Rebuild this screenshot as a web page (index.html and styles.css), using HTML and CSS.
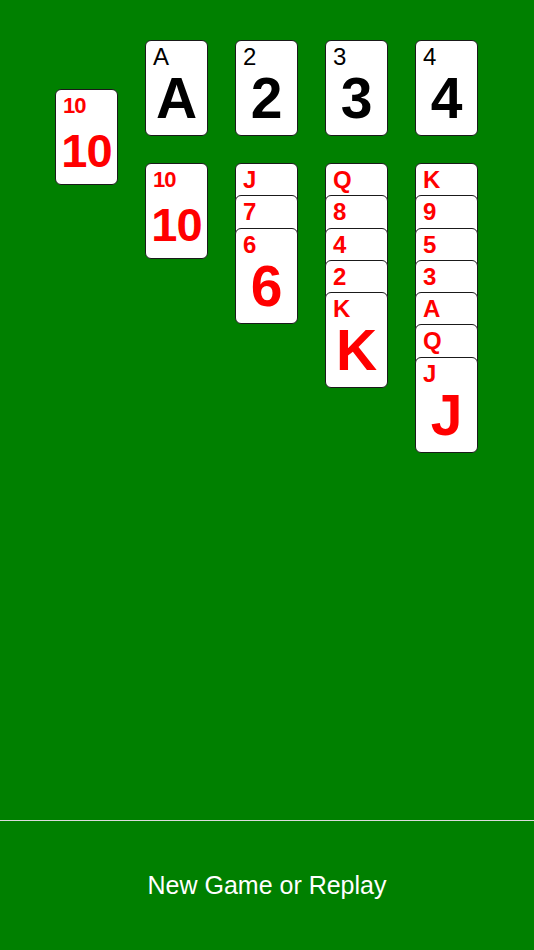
FILE: index.html
```html
<!DOCTYPE html>
<html lang="en">
  <head>
    <meta charset="UTF-8" />
    <meta name="viewport" content="width=device-width, initial-scale=1.0" />
    <title>Solitaire</title>
    <link rel="stylesheet" href="styles.css">
  </head>
  <body>
    <div class="board">
      <!-- stock -->
      <div class="card red stock">
        <div class="small ten">10</div>
        <div class="big ten">10</div>
      </div>

      <!-- foundations -->
      <div class="card black">
        <div class="small">A</div>
        <div class="big">A</div>
      </div>
      <div class="card black">
        <div class="small">2</div>
        <div class="big">2</div>
      </div>
      <div class="card black">
        <div class="small">3</div>
        <div class="big">3</div>
      </div>
      <div class="card black">
        <div class="small">4</div>
        <div class="big">4</div>
      </div>

      <!-- tableau -->
      <div class="pile col2">
        <div class="card red">
          <div class="small ten">10</div>
          <div class="big ten">10</div>
        </div>
      </div>
      <div class="pile">
        <div class="card red"><div class="small">J</div></div>
        <div class="card red"><div class="small">7</div></div>
        <div class="card red">
          <div class="small">6</div>
          <div class="big">6</div>
        </div>
      </div>
      <div class="pile">
        <div class="card red"><div class="small">Q</div></div>
        <div class="card red"><div class="small">8</div></div>
        <div class="card red"><div class="small">4</div></div>
        <div class="card red"><div class="small">2</div></div>
        <div class="card red">
          <div class="small">K</div>
          <div class="big">K</div>
        </div>
      </div>
      <div class="pile">
        <div class="card red"><div class="small">K</div></div>
        <div class="card red"><div class="small">9</div></div>
        <div class="card red"><div class="small">5</div></div>
        <div class="card red"><div class="small">3</div></div>
        <div class="card red"><div class="small">A</div></div>
        <div class="card red"><div class="small">Q</div></div>
        <div class="card red">
          <div class="small">J</div>
          <div class="big">J</div>
        </div>
      </div>
    </div>

    <div class="footer">
      <span class="new-game">New Game or Replay</span>
    </div>
  </body>
</html>
```

FILE: styles.css
```css
* {
  margin: 0;
  padding: 0;
  box-sizing: border-box;
}

html,
body {
  height: 100%;
}

body {
  display: flex;
  flex-direction: column;
  background: #008000;
  font-family: "Liberation Sans", Arial, Helvetica, sans-serif;
  overflow: hidden;
}

.board {
  flex: 1;
  display: grid;
  grid-template-columns: repeat(5, 63px);
  grid-template-rows: 96px auto;
  column-gap: 27px;
  row-gap: 27px;
  align-content: start;
  align-items: start;
  padding: 40px 0 0 55px;
}

.card {
  width: 63px;
  height: 96px;
  background: white;
  border: 1px solid #1a1a1a;
  border-radius: 6px;
  padding: 6px 0 0 7px;
}

.stock {
  grid-row: 1 / 3;
  margin-top: 49px;
}

.col2 {
  grid-column: 2;
}

.pile {
  display: flex;
  flex-direction: column;
}

.pile .card + .card {
  margin-top: -63.75px;
}

.red {
  color: #ff0000;
}

.black {
  color: #000;
}

.small {
  font-size: 24px;
  line-height: 20px;
  font-weight: bold;
}

.small.ten {
  font-size: 22px;
  letter-spacing: -1px;
}

.black .small {
  font-weight: normal;
}

.big {
  font-size: 57px;
  line-height: 50px;
  font-weight: bold;
  text-align: center;
  margin: 6px 0 0 -7px;
}

.big.ten {
  font-size: 47px;
  margin-top: 10px;
  letter-spacing: -1px;
}

.footer {
  height: 130px;
  border-top: 1px solid #dcdcdc;
  display: flex;
  align-items: center;
  justify-content: center;
}

.new-game {
  color: white;
  font-size: 25px;
}
```
